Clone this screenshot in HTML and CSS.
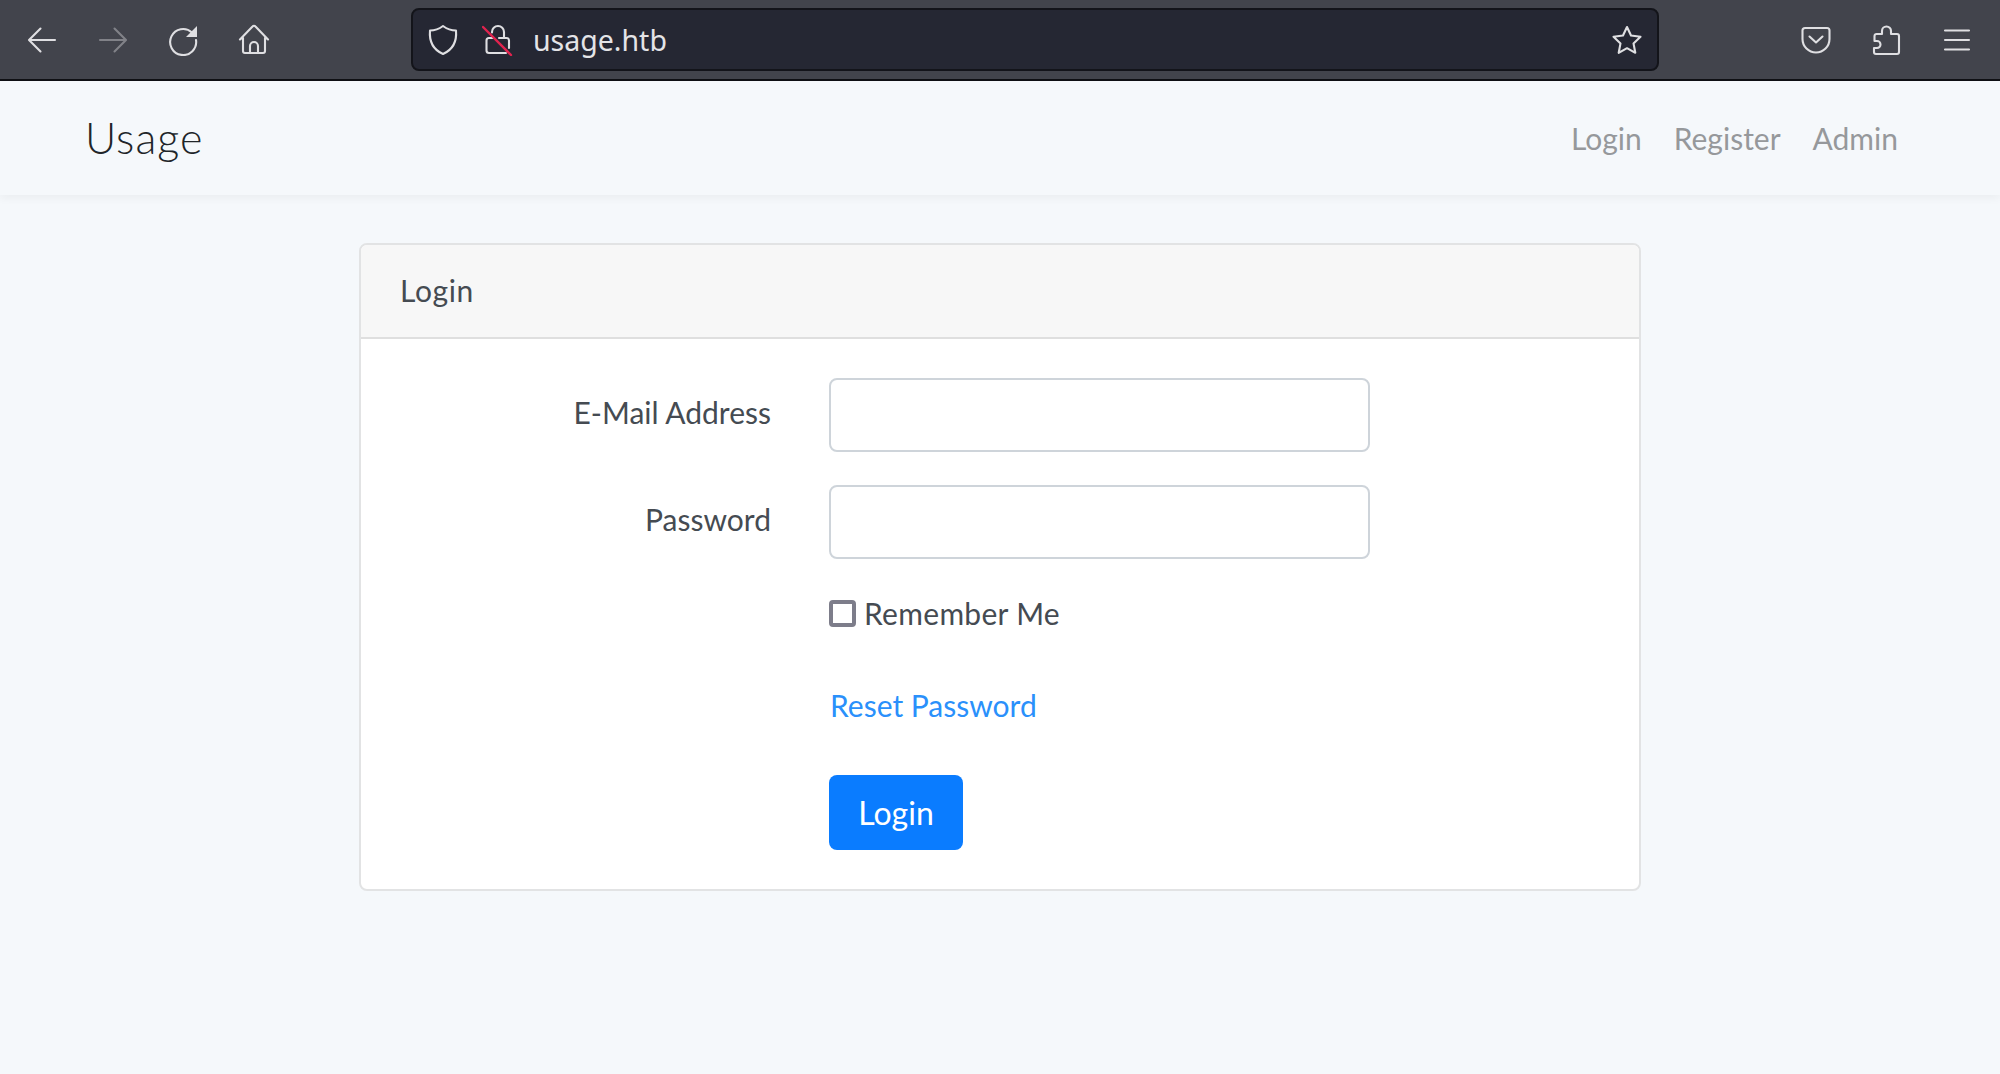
FILE: index.html
```html
<!DOCTYPE html>
<html lang="en">
<head>
<meta charset="utf-8">
<title>Usage</title>
<link rel="stylesheet" href="styles.css">
</head>
<body>
<header class="toolbar">
  <div class="tool-group">
    <svg class="icon" viewBox="0 0 32 32"><path d="M29 16H4M14.500 4.500 3 16l11.500 11.500"/></svg>
    <svg class="icon dim" viewBox="0 0 32 32"><path d="M3 16h25M17.500 4.500 29 16 17.500 27.500"/></svg>
    <svg class="icon" viewBox="0 0 32 32"><path d="M25 8.500A13 13 0 1 0 29 16"/><path class="fill" d="M30 2v11H19z"/></svg>
    <svg class="icon" viewBox="0 0 32 32"><path d="M5 14v13a2 2 0 0 0 2 2h18a2 2 0 0 0 2-2V14M2 15.500 14.500 2.500a2 2 0 0 1 3 0L30 15.500M12 29v-7a4 4 0 0 1 8 0v7"/></svg>
  </div>
  <div class="urlbar">
    <svg class="icon" viewBox="0 0 32 32"><path d="M16 2c4 3 8 4.500 13 4.500C30 18 25 26 16 30 7 26 2 18 3 6.500 8 6.500 12 5 16 2z"/></svg>
    <svg class="icon lock" viewBox="0 0 32 32"><path d="M11 14H7a2.500 2.500 0 0 0-2.500 2.500v10A2.500 2.500 0 0 0 7 29h17M27 24v-7.500a2.500 2.500 0 0 0-2.500-2.500H17M10 8.500V8a6 6 0 0 1 12 0v6"/><path class="slash" d="M1 3l28 28"/></svg>
    <span class="url">usage.htb</span>
    <svg class="icon star" viewBox="0 0 32 32"><path d="M16 3l4 8.500 9.500 1.300-7 6.600 1.800 9.400L16 24.200l-8.300 4.600 1.800-9.400-7-6.600 9.500-1.300z"/></svg>
  </div>
  <div class="tool-group right">
    <svg class="icon" viewBox="0 0 32 32"><path d="M5 4h22a2.500 2.500 0 0 1 2.500 2.500V15a13.500 13.500 0 0 1-27 0V6.500A2.500 2.500 0 0 1 5 4zM9.500 12.500 16 18.500l6.500-6"/></svg>
    <svg class="icon" viewBox="0 0 32 32"><path d="M5 30h21a2 2 0 0 0 2-2V12a2 2 0 0 0-2-2h-6V7a4.500 4.500 0 0 0-9 0v3H5.500a2 2 0 0 0-2 2v5H6a3.500 3.500 0 0 1 0 7H3v4a2 2 0 0 0 2 2z"/></svg>
    <svg class="icon" viewBox="0 0 32 32"><path d="M4 6.500h24M4 16h24M4 25.500h24"/></svg>
  </div>
</header>

<nav class="navbar">
  <a class="brand" href="#">Usage</a>
  <ul class="nav-links">
    <li><a href="#">Login</a></li>
    <li><a href="#">Register</a></li>
    <li><a href="#">Admin</a></li>
  </ul>
</nav>

<main class="content">
  <section class="card">
    <div class="card-header">Login</div>
    <form class="card-body">
      <label class="field-label" for="email">E-Mail Address</label>
      <input class="field" id="email" type="email">
      <label class="field-label" for="password">Password</label>
      <input class="field" id="password" type="password">
      <label class="remember"><input class="check" type="checkbox"><span>Remember Me</span></label>
      <a class="reset" href="#">Reset Password</a>
      <button class="submit" type="button">Login</button>
    </form>
  </section>
</main>
</body>
</html>
```

FILE: styles.css
```css
* { box-sizing: border-box; }

html, body { height: 100%; }

body {
  margin: 0;
  background: #f5f8fb;
  color: #454b52;
  font-family: "Lato", "Liberation Sans", sans-serif;
  font-size: 30px;
  overflow: hidden;
}

a { text-decoration: none; }

.toolbar {
  display: flex;
  align-items: center;
  height: 81px;
  padding: 0 27px 0 26px;
  background: #42444c;
  border-bottom: 2px solid #0f1014;
}

.tool-group {
  display: flex;
  gap: 38.500px;
  align-items: center;
}

.icon {
  flex: none;
  width: 32px;
  height: 32px;
  fill: none;
  stroke: #dfdfe2;
  stroke-width: 2.100;
  stroke-linecap: round;
  stroke-linejoin: round;
}

.dim { opacity: .4; }

.fill { fill: #dfdfe2; stroke: none; }

.slash { stroke: #e0234e; stroke-width: 2.400; }

.urlbar {
  display: flex;
  align-items: center;
  flex: none;
  width: 1248px;
  height: 63px;
  margin-left: 141.500px;
  padding: 0 14px 0 14px;
  background: #252733;
  border: 2px solid #13141a;
  border-radius: 8px;
}

.lock { margin-left: 23px; }

.url {
  margin-left: 19px;
  color: #e4e4e7;
  font-family: "Noto Sans", sans-serif;
  font-size: 28.500px;
}

.star { margin-left: auto; }

.right { margin-left: auto; }

.navbar {
  display: flex;
  align-items: center;
  justify-content: space-between;
  height: 114px;
  padding: 0 102px 0 85px;
  background: #f5f8fb;
  box-shadow: 0 4px 8px rgba(0, 0, 0, .04);
}

.brand {
  margin-top: -2px;
  color: #212529;
  font-size: 43px;
  font-weight: 300;
  letter-spacing: 1px;
}

.nav-links {
  display: flex;
  gap: 32px;
  margin: 0;
  padding: 0;
  list-style: none;
}

.nav-links a {
  color: #96989b;
}

.content {
  display: flex;
  justify-content: center;
  padding-top: 48px;
}

.card {
  width: 1282px;
  height: 648px;
  background: #fff;
  border: 2px solid #e2e3e4;
  border-radius: 8px;
  overflow: hidden;
}

.card-header {
  display: flex;
  align-items: center;
  height: 94px;
  padding: 0 0 2px 39px;
  background: #f7f7f7;
  border-bottom: 2px solid #dfdfdf;
  letter-spacing: .6px;
}

.card-body {
  display: grid;
  grid-template-columns: 410px 541px;
  grid-template-rows: 74px 74px 42px 75px auto;
  column-gap: 58px;
  row-gap: 33px;
  padding-top: 39px;
}

.field-label {
  padding-bottom: 7px;
  align-self: center;
  text-align: right;
}

.field {
  width: 541px;
  height: 74px;
  background: #fff;
  border: 2px solid #ced4da;
  border-radius: 8px;
}

.remember {
  grid-column: 2;
  display: flex;
  align-items: center;
  gap: 8px;
  letter-spacing: .3px;
}

.check {
  width: 27px;
  height: 27px;
  margin: 0;
  appearance: none;
  background: #fff;
  border: 4px solid #7d7d8a;
  border-radius: 4px;
}

.reset {
  grid-column: 2;
  align-self: center;
  color: #2a90fb;
  margin-left: 1px;
}

.submit {
  grid-column: 2;
  width: 134px;
  height: 75px;
  color: #fff;
  background: #0a7cff;
  border: 0;
  border-radius: 8px;
  font: inherit;
  font-size: 32px;
}
```
